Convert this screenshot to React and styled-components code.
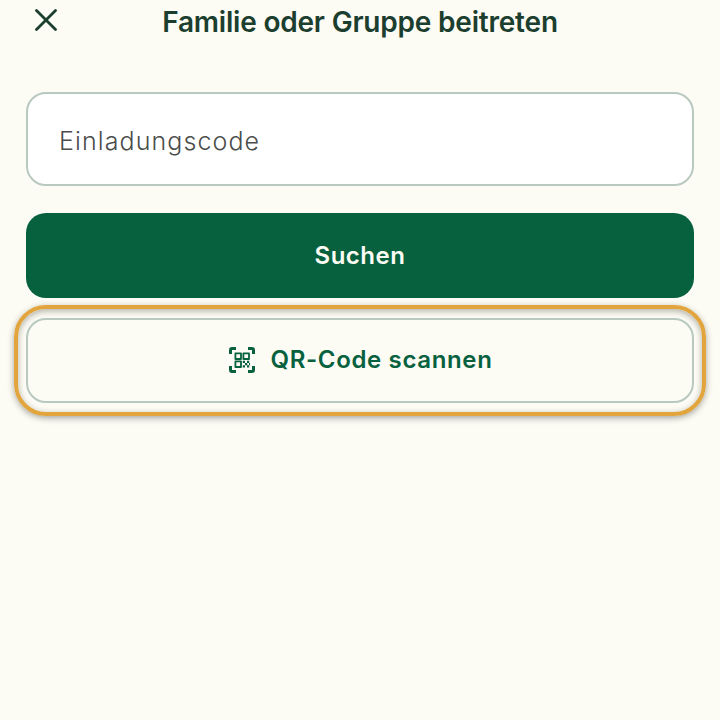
import React from 'react'
import styled, { createGlobalStyle } from 'styled-components'

const GlobalStyle = createGlobalStyle`
  html, body {
    margin: 0;
    height: 100%;
    background: #fcfbf4;
  }
`

const Page = styled.div`
  width: 720px;
  height: 720px;
  overflow: hidden;
  background: #fcfbf4;
  font-family: Inter, "Liberation Sans", sans-serif;
  padding: 0 26px;
  box-sizing: border-box;
`

const TopBar = styled.header`
  display: flex;
  align-items: center;
  justify-content: center;
  position: relative;
  height: 44px;
  margin-bottom: 48px;
`

const CloseButton = styled.button`
  position: absolute;
  left: 9px;
  top: 9px;
  width: 22px;
  height: 22px;
  padding: 0;
  border: 0;
  background: none;
  color: #1b3e2f;
  svg { display: block; }
`

const Title = styled.h1`
  margin: 0;
  font-size: 28px;
  font-weight: 600;
  color: #1b3e2f;
  letter-spacing: -0.2px;
`

const Form = styled.div`
  display: flex;
  flex-direction: column;
`

const CodeInput = styled.input`
  box-sizing: border-box;
  width: 100%;
  height: 94px;
  padding: 4px 31px 0;
  border: 2px solid #b8c9bf;
  border-radius: 20px;
  background: #fff;
  font-family: inherit;
  font-size: 25px;
  font-weight: 300;
  letter-spacing: 1.1px;
  outline: none;
  &::placeholder { color: #4a4d4b; opacity: 1; }
`

const SearchButton = styled.button`
  height: 85px;
  margin-top: 27px;
  border: 0;
  border-radius: 20px;
  background: #07613f;
  color: #fcfbf4;
  font-family: inherit;
  font-size: 24px;
  font-weight: 600;
  letter-spacing: 0.5px;
`

const ScanWrap = styled.div`
  position: relative;
  margin-top: 20px;
`

const ScanButton = styled.button`
  box-sizing: border-box;
  width: 100%;
  height: 85px;
  display: flex;
  align-items: center;
  justify-content: center;
  gap: 15px;
  padding: 0 0 2px 2px;
  border: 2px solid #b8c9bf;
  border-radius: 20px;
  background: transparent;
  color: #07613f;
  font-family: inherit;
  font-size: 24px;
  font-weight: 600;
  letter-spacing: 0.65px;
  svg { display: block; }
`

const Highlight = styled.div`
  position: absolute;
  inset: -13px -12px -13px -12px;
  border: 4px solid #e2a43c;
  border-radius: 32px;
  box-shadow: 0 2px 6px rgba(60, 60, 50, 0.45), inset 0 2px 6px rgba(60, 60, 50, 0.4);
  pointer-events: none;
`

const CloseIcon = () => (
  <svg width="22" height="22" viewBox="0 0 22 22" fill="none" stroke="currentColor" strokeWidth="2.8" strokeLinecap="round">
    <path d="M1.5 1.5 L20.5 20.5 M20.5 1.5 L1.5 20.5" />
  </svg>
)

// qr code with corner brackets
const QrIcon = () => (
  <svg width="26" height="26" viewBox="0 0 26 26" fill="none" stroke="currentColor" strokeLinejoin="round">
    <path d="M1.5 7 V3 Q1.5 1.5 3 1.5 H7 M19 1.5 H23 Q24.5 1.5 24.5 3 V7 M24.5 19 V23 Q24.5 24.5 23 24.5 H19 M7 24.5 H3 Q1.5 24.5 1.5 23 V19" strokeWidth="3" />
    <rect x="6.4" y="6.4" width="5.6" height="5.6" strokeWidth="1.8" />
    <rect x="14.4" y="6.4" width="5.6" height="5.6" strokeWidth="1.8" />
    <rect x="6.4" y="14.4" width="5.6" height="5.6" strokeWidth="1.8" />
    <path d="M13.8 13.8h2.2v2.2h-2.2z M18 13.8h2.2v2.2h-2.2z M16 16h2.2v2.2h-2.2z M20 16h1v2.2h-1z M13.8 18.2h2.2v2.2h-2.2z M18 18.2h2.2v2.2h-2.2z" fill="currentColor" stroke="none" />
  </svg>
)

export default function App() {
  return (
    <>
      <GlobalStyle />
      <Page>
        <TopBar>
          <CloseButton aria-label="Schließen"><CloseIcon /></CloseButton>
          <Title>Familie oder Gruppe beitreten</Title>
        </TopBar>
        <Form>
          <CodeInput placeholder="Einladungscode" />
          <SearchButton>Suchen</SearchButton>
          <ScanWrap>
            <ScanButton><QrIcon />QR-Code scannen</ScanButton>
            <Highlight />
          </ScanWrap>
        </Form>
      </Page>
    </>
  )
}
